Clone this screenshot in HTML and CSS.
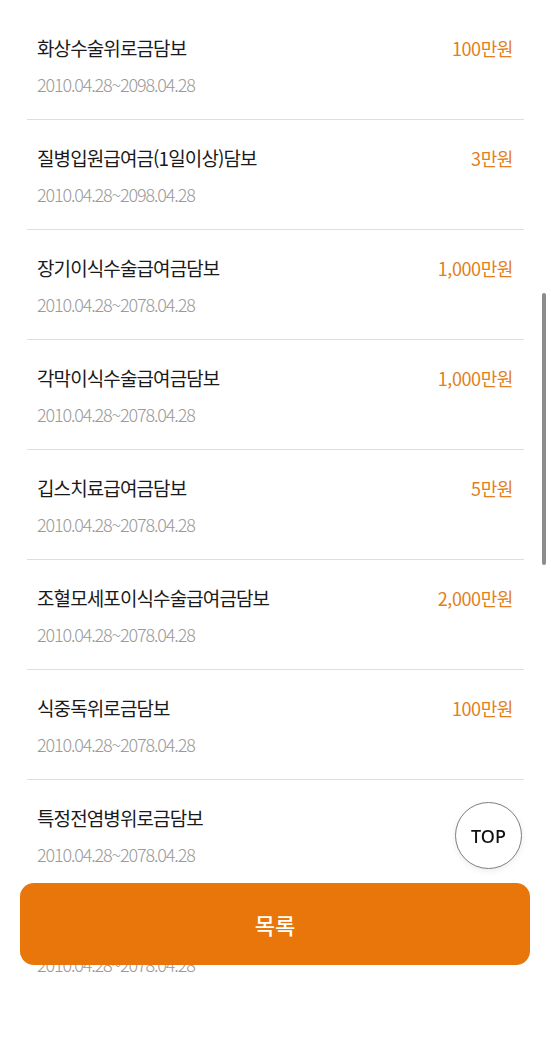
FILE: index.html
```html
<!DOCTYPE html>
<html lang="ko">
<head>
<meta charset="utf-8">
<title>담보 목록</title>
<link rel="stylesheet" href="styles.css">
</head>
<body>
<div class="page">
  <ul class="list">
    <li class="item"><div class="head"><span class="name">화상수술위로금담보</span><span class="amt">100만원</span></div><div class="period">2010.04.28~2098.04.28</div></li>
    <li class="item"><div class="head"><span class="name">질병입원급여금(1일이상)담보</span><span class="amt">3만원</span></div><div class="period">2010.04.28~2098.04.28</div></li>
    <li class="item"><div class="head"><span class="name">장기이식수술급여금담보</span><span class="amt">1,000만원</span></div><div class="period">2010.04.28~2078.04.28</div></li>
    <li class="item"><div class="head"><span class="name">각막이식수술급여금담보</span><span class="amt">1,000만원</span></div><div class="period">2010.04.28~2078.04.28</div></li>
    <li class="item"><div class="head"><span class="name">깁스치료급여금담보</span><span class="amt">5만원</span></div><div class="period">2010.04.28~2078.04.28</div></li>
    <li class="item"><div class="head"><span class="name">조혈모세포이식수술급여금담보</span><span class="amt">2,000만원</span></div><div class="period">2010.04.28~2078.04.28</div></li>
    <li class="item"><div class="head"><span class="name">식중독위로금담보</span><span class="amt">100만원</span></div><div class="period">2010.04.28~2078.04.28</div></li>
    <li class="item"><div class="head"><span class="name">특정전염병위로금담보</span></div><div class="period">2010.04.28~2078.04.28</div></li>
    <li class="item"><div class="head"><span class="name">골절진단급여금담보</span></div><div class="period">2010.04.28~2078.04.28</div></li>
  </ul>
</div>
<div class="footer"><button class="btn-list" type="button">목록</button></div>
<button class="btn-top" type="button">TOP</button>
<div class="scrollbar"></div>
</body>
</html>
```
FILE: styles.css
```css
html, body {
  margin: 0;
  padding: 0;
  background: #fff;
}
body {
  font-family: "Noto Sans CJK KR", "Noto Sans", sans-serif;
  color: #1a1a1a;
  overflow: hidden;
  height: 1040px;
}
.list {
  list-style: none;
  margin: 0;
  padding: 10px 27px 0 27px;
}
.item {
  padding: 26px 11px 24px 10px;
  border-bottom: 1px solid #dedede;
}
.item:last-child {
  border-bottom: none;
}
.head {
  display: flex;
  justify-content: space-between;
  align-items: center;
  height: 24px;
}
.name {
  font-size: 19px;
  line-height: 24px;
  letter-spacing: -0.9px;
  color: #1a1a1a;
}
.amt {
  font-size: 18px;
  line-height: 24px;
  letter-spacing: -0.4px;
  color: #e27f22;
}
.period {
  margin-top: 13px;
  font-size: 18px;
  line-height: 22px;
  font-weight: 300;
  letter-spacing: -1.15px;
  color: #9a9a9a;
}
.footer {
  position: fixed;
  left: 20px;
  right: 21px;
  bottom: 75px;
}
.btn-list {
  display: block;
  width: 100%;
  height: 82px;
  border: none;
  border-radius: 14px;
  background: #e8760a;
  color: #fff;
  font-family: "Noto Sans CJK KR", sans-serif;
  font-size: 22px;
  font-weight: 500;
}
.btn-top {
  position: fixed;
  right: 29px;
  bottom: 171px;
  width: 67px;
  height: 67px;
  padding: 0;
  border: 1px solid #7e7e7e;
  border-radius: 50%;
  background: #fff;
  box-shadow: 0 2px 6px rgba(0, 0, 0, 0.08);
  color: #111;
  font-family: "Noto Sans", sans-serif;
  font-size: 18px;
  font-weight: 500;
}
.scrollbar {
  position: fixed;
  right: 5px;
  top: 293px;
  width: 4px;
  height: 272px;
  border-radius: 2px;
  background: #8c8c8c;
}
```
